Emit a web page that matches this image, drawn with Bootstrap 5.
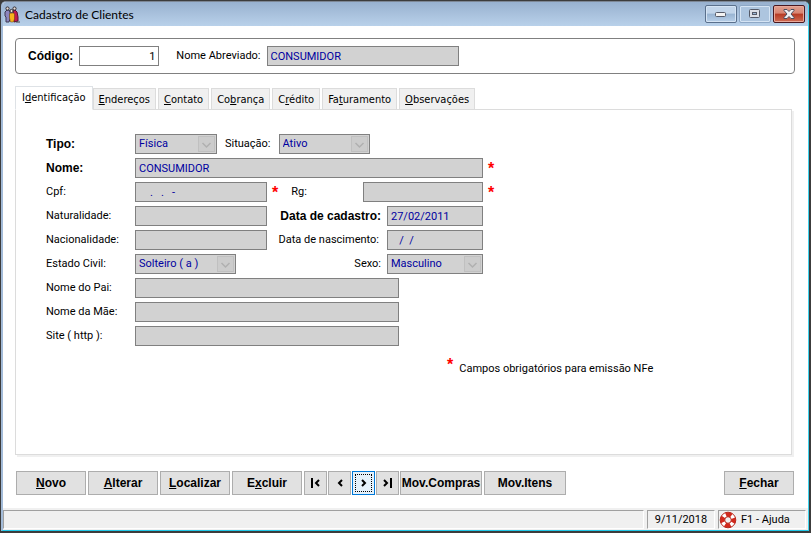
<!DOCTYPE html>
<html lang="pt-BR">
<head>
<meta charset="utf-8">
<meta name="viewport" content="width=device-width, initial-scale=1">
<title>Cadastro de Clientes</title>
<link href="https://cdn.jsdelivr.net/npm/bootstrap@5.3.0/dist/css/bootstrap.min.css" rel="stylesheet">
<style>
body{background:#3c3c3c;color:#000;font:11px/16px Roboto,"Liberation Sans",sans-serif;padding:1px 2px 2px 1px}
.win{min-height:calc(100vh - 3px);background:#fff;border:solid;border-width:1px 1px 1px 2px;border-color:#7d8795 #3fd5f0 #22c8e8 #a3bbd8;border-radius:5px 5px 0 0;overflow:hidden}
.titlebar{height:24px;background:linear-gradient(#98b1cf,#b9d1ea);padding:0 3px 0 1px}
.titlebar h1{font:12px/20px Lato,"Open Sans",sans-serif;margin:0 0 0 5px;padding-top:3px}
.ctls{gap:2px}
.ctl{width:32px;height:18px;padding:0;margin-top:3px;border:1px solid #5a708c;border-radius:2px;background:linear-gradient(#c2d5ea 45%,#98b4d2 50%,#b8d0e9);box-shadow:inset 0 0 0 1px #d5e4f4;display:flex;align-items:center;justify-content:center}
.ctl-max{border-color:#8ea8c6;background:#adc5df}
.ctl-close{border-color:#4a1820;background:linear-gradient(#e0a090,#d88472 45%,#b63a24 50%,#cf6c54);box-shadow:inset 0 0 0 1px #e8a89a}
.client{padding:12px 13px 13px 12px}
.idbox{border:1px solid #808080;border-radius:4px;height:36px;padding:0 12px}
.gap-in{margin-left:6px}
.gap-lb{margin-left:17px}
.gap-rg{margin-left:13px}
.inp{height:20px;border:1px solid #808080;border-radius:0;background:#d2d2d2;color:#0000a0;padding:0 3px;font:11px/16px Roboto,"Liberation Sans",sans-serif;opacity:1;white-space:pre}
.inp:disabled{opacity:1;color:#0000a0;-webkit-text-fill-color:#0000a0}
.inp-live{background:#fff;color:#000}
select.inp{appearance:none;background:#d2d2d2 url("data:image/svg+xml,%3Csvg xmlns='http://www.w3.org/2000/svg' width='17' height='16'%3E%3Crect x='.5' y='.5' width='16' height='15' fill='%23cccccc' stroke='%23c0c0c0'/%3E%3Cpath d='M4.500 7l4 4 4-4' fill='none' stroke='%23b0b0b0' stroke-width='1.500'/%3E%3C/svg%3E") no-repeat right 1px center}
.w-code{width:80px}.w-abbr{width:192px}.w-tipo{width:82px}.w-sit{width:91px}.w-civil{width:101px}.w-date{width:96px}.w-rg{width:120px}.w-half{width:132px}.w-mid{width:264px}.w-full{width:348px}
.strong-lb{font:bold 12px/16px "Liberation Sans",sans-serif}
.tabs{border:0;margin-top:12px;align-items:flex-end;gap:2px;padding:0}
.tabs .nav-link{font:11px/18px "DejaVu Sans Condensed","Noto Sans",sans-serif;color:#000;background:#f0f0f0;border:1px solid #dcdcdc;border-radius:0;height:22px;margin:0;padding:2px 5px 0}
.tabs .nav-link.active{background:#fff;border-bottom-color:#fff;height:24px;color:#000;position:relative;z-index:1;margin-right:-2px;padding:2px 6px 0}
.pane{border:1px solid #dcdcdc;box-shadow:2px 2px 0 #f0f0f0;margin:-1px 3px 0 0;padding:24px 30px}
.frow{display:grid;grid-template-columns:89px 348px auto;align-items:center;height:20px;margin-bottom:4px}
.star{color:#f00;font:bold 16px/16px "Liberation Sans",sans-serif;height:14px;margin-left:5px}
.note{padding:7px 0 0 396px}
.tbtn{height:24px;border:1px solid #adadad;border-radius:0;background:#e1e1e1;color:#000;padding:0;font:bold 12px/20px "Liberation Sans",sans-serif;width:70px}
.tbtn-nav{width:23px;display:flex;align-items:center;justify-content:center}
.tbtn-wide{width:82px}
.tbtn-focus{border-color:#0078d7;background:#e5f1fb;outline:1px dotted #000;outline-offset:-4px}
.bar{margin-top:16px;padding:0 1px}
.bar-set{gap:2px}
.bar-nav{gap:1px}
.status{background:#f0f0f0;padding:2px 2px 0 0;gap:3px;height:22px}
.spanel{border:solid;border-width:1px;border-color:#a0a0a0 #fff #fff #a0a0a0;height:19px;line-height:18px}
.sp-date{width:68px}.sp-help{width:88px}
a.sp-help{color:#000;text-decoration:none}
</style>
<script src="https://cdn.jsdelivr.net/npm/bootstrap@5.3.0/dist/js/bootstrap.bundle.min.js"></script>
</head>
<body>
<div class="win d-flex flex-column">
  <header class="titlebar d-flex">
    <svg class="mt-1" width="16" height="17" viewBox="0 0 16 17" aria-hidden="true">
      <path d="M1 6l2-2h2l1 2v7l-1 3H2V11L1 10z" fill="#8d85bd" stroke="#3c3850"/>
      <path d="M9 5l2-1 2 2 1 5v4l-4 1z" fill="#c31b50" stroke="#5a1030"/>
      <path d="M5.500 8l1-1h3l1 1v5l-1 3h-3l-1-4z" fill="#f7b21c" stroke="#5a3a10" stroke-width=".5"/>
      <path d="M12 16h4" stroke="#444"/>
      <g fill="#e9dcd5" stroke="#332f35"><circle cx="3.500" cy="2.500" r="1.600"/><circle cx="10.500" cy="2.500" r="1.600"/><circle cx="7.500" cy="5" r="1.600"/></g>
    </svg>
    <h1>Cadastro de Clientes</h1>
    <div class="ctls d-flex ms-auto">
      <button class="ctl" type="button" aria-label="Minimizar"><svg width="12" height="6"><rect x=".5" y="1.500" width="10" height="4" rx="1" fill="#f3f3f3" stroke="#555a68"/></svg></button>
      <button class="ctl ctl-max" type="button" aria-label="Maximizar"><svg width="12" height="10"><rect x=".5" y=".5" width="10" height="8" rx="1" fill="#dcdfe6" stroke="#555a68"/><rect x="3.500" y="3.500" width="4" height="2" fill="#9db8d6" stroke="#555a68"/></svg></button>
      <button class="ctl ctl-close" type="button" aria-label="Fechar janela"><svg width="12" height="10" viewBox="0 0 12 10"><path d="M1 .5h3l2 2 2-2h3v1L8 5l3 3.500v1H8l-2-2-2 2H1v-1L4 5 1 1.500z" fill="#f0f0f4" stroke="#4d4f60"/></svg></button>
    </div>
  </header>
  <main class="client d-flex flex-column flex-grow-1">
    <div class="idbox d-flex align-items-center">
      <label class="strong-lb" for="cod">Código:</label>
      <input id="cod" class="inp inp-live w-code text-end gap-in" value="1">
      <label class="gap-lb" for="abr">Nome Abreviado:</label>
      <input id="abr" class="inp w-abbr gap-in" value="CONSUMIDOR" disabled>
    </div>
    <nav class="nav nav-tabs tabs">
      <a class="nav-link active" href="#ident">I<u>d</u>entificação</a>
      <a class="nav-link" href="#end"><u>E</u>ndereços</a>
      <a class="nav-link" href="#cont"><u>C</u>ontato</a>
      <a class="nav-link" href="#cobr">Co<u>b</u>rança</a>
      <a class="nav-link" href="#cred">C<u>r</u>édito</a>
      <a class="nav-link" href="#fat">Fa<u>t</u>uramento</a>
      <a class="nav-link" href="#obs"><u>O</u>bservações</a>
    </nav>
    <form id="ident" class="pane flex-grow-1">
      <div class="frow"><label class="strong-lb" for="tipo">Tipo:</label>
        <div class="d-flex align-items-center"><select id="tipo" class="inp w-tipo" disabled><option>Física</option></select><label class="ms-2" for="sit">Situação:</label><select id="sit" class="inp w-sit ms-2" disabled><option>Ativo</option></select></div></div>
      <div class="frow"><label class="strong-lb" for="nome">Nome:</label>
        <input id="nome" class="inp w-full" value="CONSUMIDOR" disabled><span class="star">*</span></div>
      <div class="frow"><label for="cpf">Cpf:</label>
        <div class="d-flex align-items-center"><input id="cpf" class="inp w-half" value="    .   .   -" disabled><span class="star">*</span><label class="gap-rg" for="rg">Rg:</label><input id="rg" class="inp w-rg ms-auto" disabled></div><span class="star">*</span></div>
      <div class="frow"><label for="nat">Naturalidade:</label>
        <div class="d-flex align-items-center"><input id="nat" class="inp w-half" disabled><label class="strong-lb ms-auto" for="dcad">Data de cadastro:</label><input id="dcad" class="inp w-date gap-in" value="27/02/2011" disabled></div></div>
      <div class="frow"><label for="nac">Nacionalidade:</label>
        <div class="d-flex align-items-center"><input id="nac" class="inp w-half" disabled><label class="ms-auto" for="dnas">Data de nascimento:</label><input id="dnas" class="inp w-date ms-2" value="   /  /" disabled></div></div>
      <div class="frow"><label for="civil">Estado Civil:</label>
        <div class="d-flex align-items-center"><select id="civil" class="inp w-civil" disabled><option>Solteiro ( a )</option></select><label class="ms-auto" for="sexo">Sexo:</label><select id="sexo" class="inp w-date gap-in" disabled><option>Masculino</option></select></div></div>
      <div class="frow"><label for="pai">Nome do Pai:</label><input id="pai" class="inp w-mid" disabled></div>
      <div class="frow"><label for="mae">Nome da Mãe:</label><input id="mae" class="inp w-mid" disabled></div>
      <div class="frow"><label for="site">Site ( http ):</label><input id="site" class="inp w-mid" disabled></div>
      <div class="note d-flex align-items-start"><span class="star">*</span><span class="gap-in mt-1">Campos obrigatórios para emissão NFe</span></div>
    </form>
    <div class="bar d-flex">
      <div class="bar-set d-flex">
        <button class="tbtn" type="button"><u>N</u>ovo</button>
        <button class="tbtn" type="button"><u>A</u>lterar</button>
        <button class="tbtn" type="button"><u>L</u>ocalizar</button>
        <button class="tbtn" type="button">E<u>x</u>cluir</button>
        <div class="bar-nav d-flex">
          <button class="tbtn tbtn-nav" type="button" aria-label="Primeiro"><svg width="9" height="10" fill="none" stroke="#000" stroke-width="2"><path d="M1 0v10M8 2L5 5l3 3"/></svg></button>
          <button class="tbtn tbtn-nav" type="button" aria-label="Anterior"><svg width="6" height="8" fill="none" stroke="#000" stroke-width="2"><path d="M5 1L2 4l3 3"/></svg></button>
          <button class="tbtn tbtn-nav tbtn-focus" type="button" aria-label="Próximo"><svg width="6" height="8" fill="none" stroke="#000" stroke-width="2"><path d="M1 1l3 3-3 3"/></svg></button>
          <button class="tbtn tbtn-nav" type="button" aria-label="Último"><svg width="9" height="10" fill="none" stroke="#000" stroke-width="2"><path d="M8 0v10M1 2l3 3-3 3"/></svg></button>
          <button class="tbtn tbtn-wide" type="button">Mov.Compras</button>
        </div>
        <button class="tbtn tbtn-wide" type="button">Mov.Itens</button>
      </div>
      <button class="tbtn ms-auto" type="button"><u>F</u>echar</button>
    </div>
  </main>
  <footer class="status d-flex">
    <div class="spanel flex-grow-1"></div>
    <div class="spanel sp-date text-center">9/11/2018</div>
    <a class="spanel sp-help d-flex align-items-center" href="#ajuda">
      <svg width="18" height="18" viewBox="0 0 18 18" aria-hidden="true"><circle cx="9" cy="9" r="5.500" fill="none" stroke="#fff" stroke-width="5"/><circle cx="9" cy="9" r="5.500" fill="none" stroke="#d2281c" stroke-width="4.500" stroke-dasharray="5.640 3" stroke-dashoffset="2.820"/><circle cx="9" cy="9" r="7.800" fill="none" stroke="#b8281c"/><circle cx="9" cy="9" r="3.300" fill="none" stroke="#b8281c"/></svg>
      <span class="ms-1">F1 - Ajuda</span></a>
  </footer>
</div>
</body>
</html>
